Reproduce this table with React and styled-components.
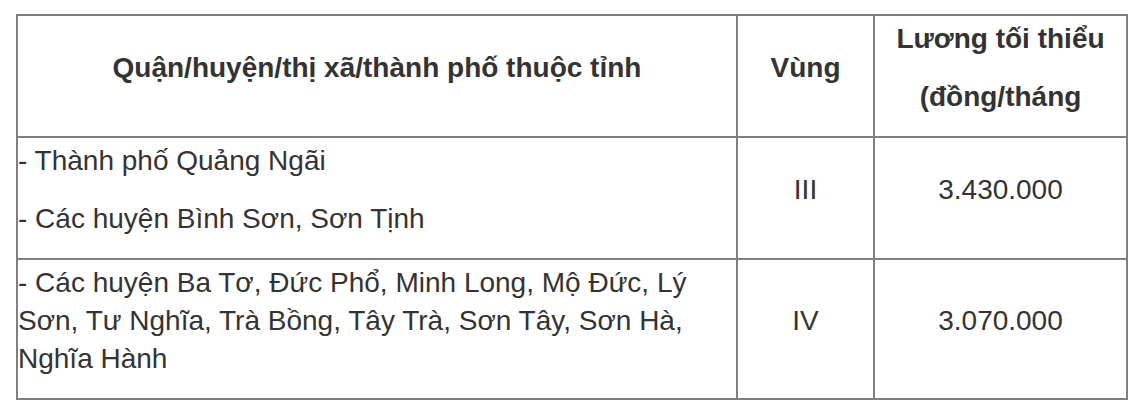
import styled, { createGlobalStyle } from 'styled-components';

const GlobalStyle = createGlobalStyle`
    body {
        margin: 0;
        background: #ffffff;
        font-family: 'Liberation Sans', Arial, sans-serif;
        color: #333333;
    }
`;

const Page = styled.div`
    padding: 14px 19px 0 16px;
`;

const Table = styled.table`
    width: 1104px;
    border-collapse: collapse;
    border: 2px solid #808080;
    table-layout: fixed;
`;

const HeadCell = styled.th`
    width: ${({ $width }) => $width}px;
    border: 2px solid #808080;
    padding: 4px 0 0;
    vertical-align: middle;
    text-align: center;
    font-size: 28px;
    font-weight: 700;
`;

const Cell = styled.td`
    border: 2px solid #808080;
    padding: 4px 0 0;
    vertical-align: middle;
    text-align: ${({ $align }) => $align || 'left'};
    font-size: 28px;
    font-weight: 400;
`;

const Para = styled.p`
    margin: 0 0 20px;
    line-height: 38px;
`;

const rows = [
    {
        areas: ['- Thành phố Quảng Ngãi', '- Các huyện Bình Sơn, Sơn Tịnh'],
        zone: 'III',
        wage: '3.430.000',
    },
    {
        areas: [
            '- Các huyện Ba Tơ, Đức Phổ, Minh Long, Mộ Đức, Lý Sơn, Tư Nghĩa, Trà Bồng, Tây Trà, Sơn Tây, Sơn Hà, Nghĩa Hành',
        ],
        zone: 'IV',
        wage: '3.070.000',
    },
];

const App = () => (
    <Page>
        <GlobalStyle />
        <Table>
            <thead>
                <tr>
                    <HeadCell $width={718}>
                        <Para>Quận/huyện/thị xã/thành phố thuộc tỉnh</Para>
                    </HeadCell>
                    <HeadCell $width={135}>
                        <Para>Vùng</Para>
                    </HeadCell>
                    <HeadCell $width={251}>
                        <Para>Lương tối thiểu</Para>
                        <Para>(đồng/tháng</Para>
                    </HeadCell>
                </tr>
            </thead>
            <tbody>
                {rows.map((row) => (
                    <tr key={row.zone}>
                        <Cell>
                            {row.areas.map((area) => (
                                <Para key={area}>{area}</Para>
                            ))}
                        </Cell>
                        <Cell $align="center">
                            <Para>{row.zone}</Para>
                        </Cell>
                        <Cell $align="center">
                            <Para>{row.wage}</Para>
                        </Cell>
                    </tr>
                ))}
            </tbody>
        </Table>
    </Page>
);

export default App;
